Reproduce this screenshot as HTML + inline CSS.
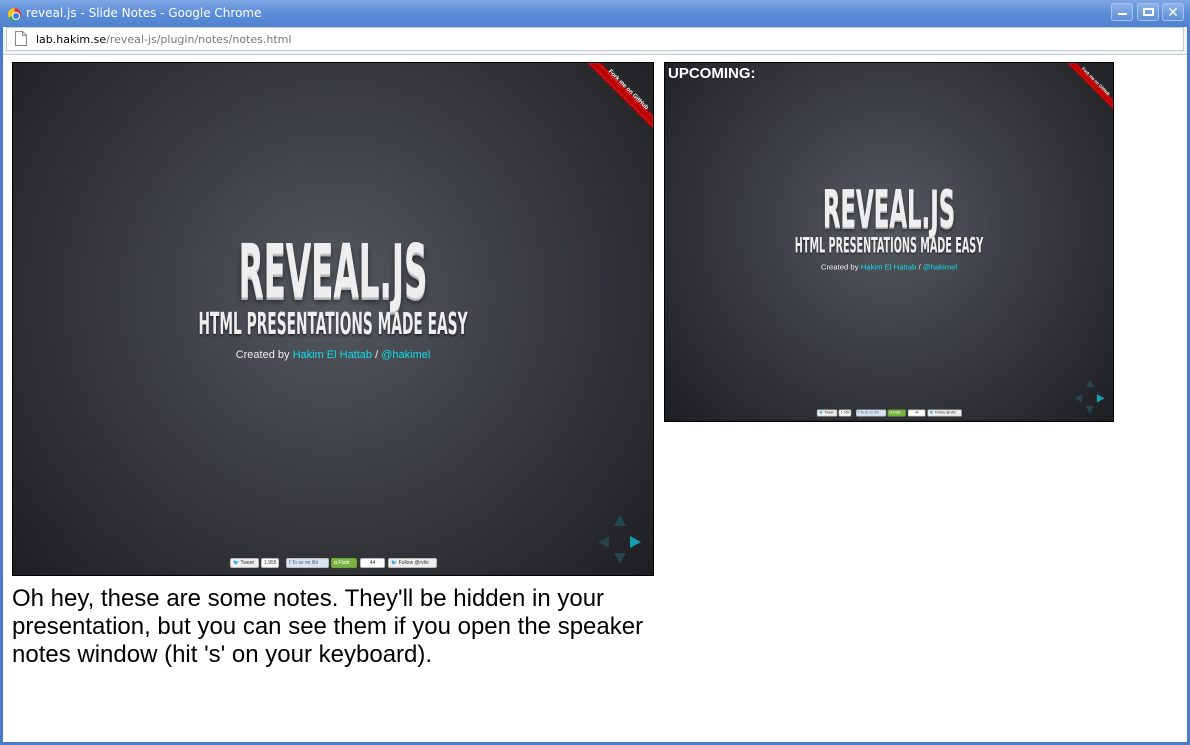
<!DOCTYPE html>
<html><head><meta charset="utf-8"><style>
*{margin:0;padding:0;box-sizing:border-box}
body{width:1190px;height:745px;overflow:hidden;background:#4a7cc9;font-family:"Liberation Sans",sans-serif;position:relative}
.title{position:absolute;left:0;top:0;width:1190px;height:28px;background:linear-gradient(#7ea7e6,#5a8cd8 50%,#4f81d0);}
.title .t{position:absolute;left:26px;top:6px;color:#fff;font-family:"DejaVu Sans",sans-serif;font-size:12px}
.logo{position:absolute;left:8px;top:8px;width:13px;height:13px;border-radius:50%;background:conic-gradient(#e03a2e 0 120deg,#3aa54a 120deg 240deg,#f5c518 240deg);}
.logo:after{content:"";position:absolute;left:3.5px;top:3.5px;width:6px;height:6px;border-radius:50%;background:#3a7be0;border:1px solid #fff}
.btn{position:absolute;top:3px;width:22px;height:18px;border:1px solid #a9c3ec;border-radius:3px;background:linear-gradient(#8fb4ea,#5e8fd8)}
.addr{position:absolute;left:3px;top:27px;width:1184px;height:28px;background:#f2f4f7;}
.addr .box{position:absolute;left:3px;top:0;width:1178px;height:24px;background:#fff;border:1px solid #c4ccd6}
.addr .u{position:absolute;left:29px;top:5px;font-family:"DejaVu Sans",sans-serif;font-size:11px;color:#000}
.addr .u span{color:#777}
.content{position:absolute;left:3px;top:54px;width:1184px;height:688px;background:#fff;border-top:1px solid #c7ccd3}
.slide{position:absolute;width:640px;height:512px;background:radial-gradient(circle at 50% 45%,#555a5f 0%,#3a3d42 45%,#1e1f22 100%);overflow:hidden;transform-origin:0 0}
.h1{position:absolute;left:0;width:640px;top:172px;text-align:center;color:#eee;font-family:"DejaVu Sans Condensed",sans-serif;font-weight:bold;font-size:74px;line-height:74px;transform:scaleX(0.49);text-shadow:0 1px 0 #ccc,0 2px 0 #bbb,0 3px 0 #aaa,0 5px 8px rgba(0,0,0,.5)}
.h3{position:absolute;left:0;width:640px;top:247px;text-align:center;color:#eee;font-family:"DejaVu Sans Condensed",sans-serif;font-weight:bold;font-size:30px;line-height:30px;transform:scaleX(0.51);text-shadow:0 2px 3px rgba(0,0,0,.5)}
.by{position:absolute;left:0;width:640px;top:286px;text-align:center;color:#eee;font-size:11px}
.by a{color:#13daec;text-decoration:none}
.soc{position:absolute;top:495px;height:10px;background:#eee;border:1px solid #bbb;border-radius:2px;font-size:5px;line-height:8px;color:#333;padding:0 2px;overflow:hidden;white-space:nowrap}
.ctl{position:absolute;width:0;height:0;border:6px solid transparent}
.notes{position:absolute;left:12px;top:585px;font-size:24px;line-height:28px;color:#000}
.up{position:absolute;left:668px;top:65px;color:#fff;font-weight:bold;font-size:15px;z-index:3}
</style></head><body>
<div class="title"><div class="logo"></div><div class="t">reveal.js - Slide Notes - Google Chrome</div>
<div class="btn" style="left:1111px"><div style="position:absolute;left:6px;top:9px;width:9px;height:2px;background:#fff"></div></div>
<div class="btn" style="left:1137px"><div style="position:absolute;left:5px;top:4px;width:11px;height:8px;border:2px solid #fff;border-radius:1px"></div></div>
<div class="btn" style="left:1162px;color:#fff;font-size:14px;text-align:center;line-height:16px">✕</div>
</div>
<div class="addr"><div class="box">
<svg style="position:absolute;left:8px;top:3px" width="12" height="15"><path d="M.5 .5h7l4 4v10H.5z M7.5 .5v4h4" fill="#fff" stroke="#888"/></svg>
<div class="u">lab.hakim.se<span>/reveal-js/plugin/notes/notes.html</span></div></div></div>
<div class="content"></div>

<div style="position:absolute;left:12px;top:62px;width:642px;height:514px;background:#000"></div>
<div class="slide" id="s1" style="left:13px;top:63px">
<svg style="position:absolute;left:0;top:0" width="640" height="80"><polygon points="574,0 588,0 640,52 640,66" fill="#b00"/><polygon points="577,0 585,0 640,55 640,63" fill="none" stroke="#f66" stroke-width=".6" stroke-dasharray="1 1"/></svg>
<div style="position:absolute;left:580px;top:24px;width:70px;transform:rotate(45deg);color:#fff;font-size:6px;font-weight:bold;text-align:center">Fork me on GitHub</div>
<div class="h1">REVEAL.JS</div>
<div class="h3">HTML PRESENTATIONS MADE EASY</div>
<div class="by">Created by <a>Hakim El Hattab</a> / <a>@hakimel</a></div>
<div class="soc" style="left:217px;width:29px">🐦 Tweet</div>
<div class="soc" style="left:248px;width:18px;background:#fff">1,955</div>
<div class="soc" style="left:273px;width:43px;background:#dbe3f2;color:#3b5998">f To se mi líbí</div>
<div class="soc" style="left:318px;width:26px;background:#7bb342;color:#fff;border-color:#6a3">◘ Flattr</div>
<div class="soc" style="left:347px;width:25px;background:#fff;text-align:center">44</div>
<div class="soc" style="left:375px;width:49px">🐦 Follow @rvlio</div>
<div class="ctl" style="left:601px;top:452px;border-bottom:11px solid #25464c;border-top:0"></div>
<div class="ctl" style="left:601px;top:490px;border-top:11px solid #25464c;border-bottom:0"></div>
<div class="ctl" style="left:585px;top:473px;border-right:11px solid #25464c;border-left:0"></div>
<div class="ctl" style="left:617px;top:473px;border-left:11px solid #13a0b0;border-right:0"></div>
</div>

<div style="position:absolute;left:664px;top:62px;width:450px;height:360px;background:#000"></div>
<div class="slide" id="s2" style="left:665px;top:63px;transform:scale(0.7);height:511px"></div>
<div class="up">UPCOMING:</div>

<div class="notes">Oh hey, these are some notes. They'll be hidden in your<br>presentation, but you can see them if you open the speaker<br>notes window (hit 's' on your keyboard).</div>
<script>document.getElementById('s2').innerHTML=document.getElementById('s1').innerHTML;</script>
</body></html>
